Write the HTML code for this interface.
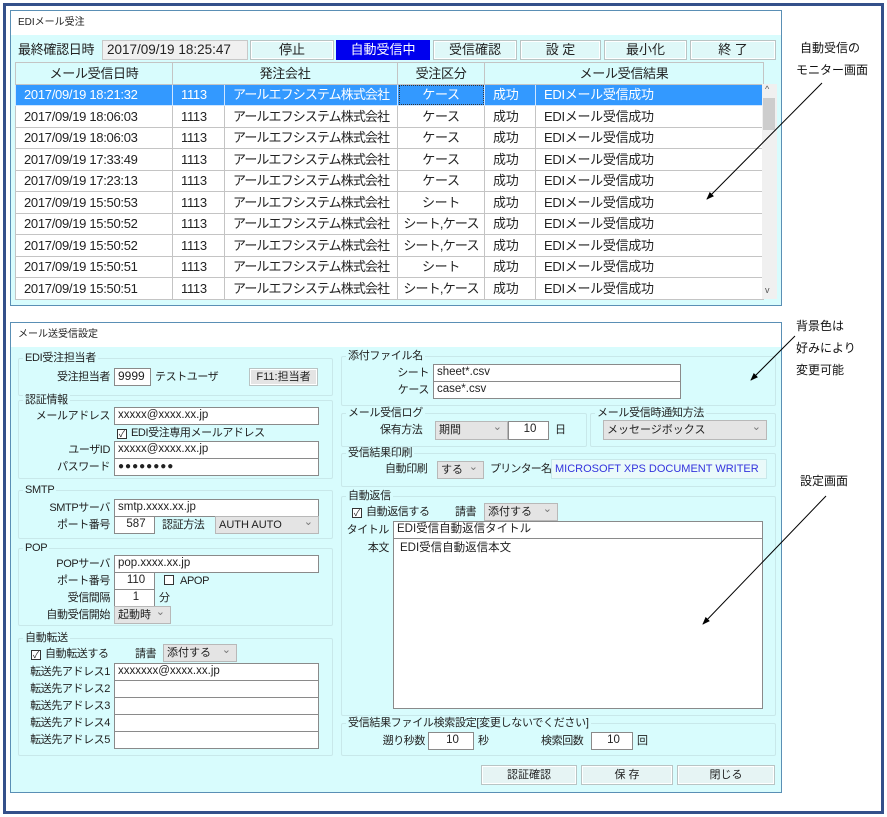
<!DOCTYPE html>
<html><head><meta charset="utf-8">
<style>
*{box-sizing:border-box;margin:0;padding:0}
body{width:887px;height:817px;background:#fff;position:relative;overflow:hidden;font-family:"Liberation Sans","Noto Sans CJK JP",sans-serif;color:#222}
.a{position:absolute;white-space:nowrap}
.frame{left:3px;top:3px;width:881px;height:811px;border:3px solid #34508a}
.win{background:#d8fcfd;border:1px solid #5a8fb5;overflow:hidden}
.wt{position:absolute;left:0;top:0;right:0;background:#fff;font-size:10px;padding:6px 0 0 7px;line-height:12px}
.btn{background:#dff8f8;border:1px solid #b9c4c4;box-shadow:inset 0 0 0 1px #fff;font-size:13px;text-align:center;line-height:18px}
table{border-collapse:collapse;position:absolute;left:4px;top:51px;font-size:13px;table-layout:fixed;width:748px;letter-spacing:-0.3px}
td,th{border:1px solid #c4c4c4;height:21.5px;padding:0 0 0 8px;font-weight:normal;text-align:left;white-space:nowrap;overflow:hidden;line-height:19px}
td.co{letter-spacing:-0.9px}
td.k{letter-spacing:-0.8px}
th{background:#d8fcfd;text-align:center;padding:0}
td.c{text-align:center;padding:0}
tr.sel td{background:#3399ff;color:#fff;border-color:#cfe6ff}
tbody tr{background:#fff}
.g{border:1px solid #c8e8ea;border-radius:2px}
.gl{position:absolute;font-size:11px;top:-7px;left:4px;background:#d8fcfd;padding:0 2px;line-height:12px;letter-spacing:-0.3px}
.box{background:#fff;border:1px solid #8a8a8a;font-size:11.5px;line-height:15px;padding-left:3px;overflow:hidden}
.sel2{background:#e4e4e4;border:1px solid #b8b8b8;font-size:11px;line-height:16px;padding-left:3px}
.sel2:after{content:"⌄";position:absolute;right:5px;top:-3px;color:#777;font-size:11px}
.l{font-size:11px;text-align:right;line-height:13px;letter-spacing:-0.4px}
.t{font-size:11px;line-height:13px;letter-spacing:-0.4px}
.cb{display:inline-block;width:10px;height:10px;border:1px solid #333;vertical-align:-1px;margin-right:4px;font-size:9px;line-height:8px;text-align:center;background:#fff;letter-spacing:0}
.ann{font-size:12px;color:#111;line-height:14px}
</style></head><body>
<div class="a frame"></div>

<div class="a win" style="left:10px;top:10px;width:772px;height:296px">
 <div class="wt" style="height:24px">EDIメール受注</div>
 <table>
<colgroup><col style="width:157px"><col style="width:52px"><col style="width:173px"><col style="width:87px"><col style="width:51px"><col style="width:228px"></colgroup>
<thead><tr><th>メール受信日時</th><th colspan="2">発注会社</th><th>受注区分</th><th colspan="2">メール受信結果</th></tr></thead>
<tbody>
<tr class="sel"><td>2017/09/19 18:21:32</td><td>1113</td><td class="co">アールエフシステム株式会社</td><td class="c" style="outline:1px dotted #333;outline-offset:-2px">ケース</td><td>成功</td><td>EDIメール受信成功</td></tr>
<tr><td>2017/09/19 18:06:03</td><td>1113</td><td class="co">アールエフシステム株式会社</td><td class="c">ケース</td><td>成功</td><td>EDIメール受信成功</td></tr>
<tr><td>2017/09/19 18:06:03</td><td>1113</td><td class="co">アールエフシステム株式会社</td><td class="c">ケース</td><td>成功</td><td>EDIメール受信成功</td></tr>
<tr><td>2017/09/19 17:33:49</td><td>1113</td><td class="co">アールエフシステム株式会社</td><td class="c">ケース</td><td>成功</td><td>EDIメール受信成功</td></tr>
<tr><td>2017/09/19 17:23:13</td><td>1113</td><td class="co">アールエフシステム株式会社</td><td class="c">ケース</td><td>成功</td><td>EDIメール受信成功</td></tr>
<tr><td>2017/09/19 15:50:53</td><td>1113</td><td class="co">アールエフシステム株式会社</td><td class="c">シート</td><td>成功</td><td>EDIメール受信成功</td></tr>
<tr><td>2017/09/19 15:50:52</td><td>1113</td><td class="co">アールエフシステム株式会社</td><td class="c k">シート,ケース</td><td>成功</td><td>EDIメール受信成功</td></tr>
<tr><td>2017/09/19 15:50:52</td><td>1113</td><td class="co">アールエフシステム株式会社</td><td class="c k">シート,ケース</td><td>成功</td><td>EDIメール受信成功</td></tr>
<tr><td>2017/09/19 15:50:51</td><td>1113</td><td class="co">アールエフシステム株式会社</td><td class="c">シート</td><td>成功</td><td>EDIメール受信成功</td></tr>
<tr><td>2017/09/19 15:50:51</td><td>1113</td><td class="co">アールエフシステム株式会社</td><td class="c k">シート,ケース</td><td>成功</td><td>EDIメール受信成功</td></tr>
</tbody></table>
</div>
<div class="a" style="left:18px;top:41px;font-size:13px;line-height:18px;letter-spacing:-0.3px">最終確認日時</div>
<div class="a" style="left:102px;top:40px;width:146px;height:20px;background:#f0f0f0;border:1px solid #c8c8c8;font-size:13.5px;line-height:18px;padding-left:4px">2017/09/19 18:25:47</div>
<div class="a btn" style="left:250px;top:40px;width:84px;height:20px">停止</div>
<div class="a btn" style="left:336px;top:40px;width:94px;height:20px;background:#0000ee;color:#fff;border-color:#0000ee;box-shadow:none">自動受信中</div>
<div class="a btn" style="left:433px;top:40px;width:84px;height:20px">受信確認</div>
<div class="a btn" style="left:520px;top:40px;width:81px;height:20px">設 定</div>
<div class="a btn" style="left:604px;top:40px;width:83px;height:20px">最小化</div>
<div class="a btn" style="left:690px;top:40px;width:86px;height:20px">終 了</div>
<div class="a" style="left:762px;top:84px;width:15px;height:215px;background:#f0f0f0"></div>
<div class="a" style="left:763px;top:98px;width:12px;height:32px;background:#cdcdcd"></div>
<div class="a" style="left:765px;top:84px;font-size:9px;color:#555">^</div>
<div class="a" style="left:765px;top:285px;font-size:9px;color:#555">v</div>

<div class="a win" style="left:10px;top:322px;width:772px;height:471px">
 <div class="wt" style="height:24px">メール送受信設定</div>
</div>

<div class="a g" style="left:18px;top:358px;width:315px;height:38px"><span class="gl">EDI受注担当者</span></div>
<div class="a l" style="left:20px;top:371px;width:90px">受注担当者</div>
<div class="a box" style="left:114px;top:368px;width:37px;height:18px;font-size:12px">9999</div>
<div class="a t" style="left:155px;top:371px">テストユーザ</div>
<div class="a btn" style="left:249px;top:368px;width:69px;height:18px;font-size:11px;line-height:16px;background:#e4e4e4">F11:担当者</div>

<div class="a g" style="left:18px;top:400px;width:315px;height:79px"><span class="gl">認証情報</span></div>
<div class="a l" style="left:20px;top:410px;width:90px">メールアドレス</div>
<div class="a box" style="left:114px;top:407px;width:205px;height:18px">xxxxx@xxxx.xx.jp</div>
<div class="a t" style="left:117px;top:427px"><span class="cb">✓</span>EDI受注専用メールアドレス</div>
<div class="a l" style="left:20px;top:444px;width:90px">ユーザID</div>
<div class="a box" style="left:114px;top:441px;width:205px;height:18px">xxxxx@xxxx.xx.jp</div>
<div class="a l" style="left:20px;top:461px;width:90px">パスワード</div>
<div class="a box" style="left:114px;top:458px;width:205px;height:18px;font-size:10px;letter-spacing:1px">●●●●●●●●</div>

<div class="a g" style="left:18px;top:490px;width:315px;height:49px"><span class="gl">SMTP</span></div>
<div class="a l" style="left:20px;top:502px;width:90px">SMTPサーバ</div>
<div class="a box" style="left:114px;top:499px;width:205px;height:18px">smtp.xxxx.xx.jp</div>
<div class="a l" style="left:20px;top:519px;width:90px">ポート番号</div>
<div class="a box" style="left:114px;top:516px;width:41px;height:18px;text-align:center">587</div>
<div class="a t" style="left:162px;top:519px">認証方法</div>
<div class="a sel2" style="left:215px;top:516px;width:104px;height:18px">AUTH AUTO</div>

<div class="a g" style="left:18px;top:548px;width:315px;height:78px"><span class="gl">POP</span></div>
<div class="a l" style="left:20px;top:558px;width:90px">POPサーバ</div>
<div class="a box" style="left:114px;top:555px;width:205px;height:18px">pop.xxxx.xx.jp</div>
<div class="a l" style="left:20px;top:575px;width:90px">ポート番号</div>
<div class="a box" style="left:114px;top:572px;width:41px;height:18px;text-align:center">110</div>
<div class="a t" style="left:164px;top:575px"><span class="cb"></span> APOP</div>
<div class="a l" style="left:20px;top:592px;width:90px">受信間隔</div>
<div class="a box" style="left:114px;top:589px;width:41px;height:18px;text-align:center">1</div>
<div class="a t" style="left:159px;top:592px">分</div>
<div class="a l" style="left:20px;top:609px;width:90px">自動受信開始</div>
<div class="a sel2" style="left:114px;top:606px;width:57px;height:18px">起動時</div>

<div class="a g" style="left:18px;top:638px;width:315px;height:118px"><span class="gl">自動転送</span></div>
<div class="a t" style="left:31px;top:648px"><span class="cb">✓</span>自動転送する</div>
<div class="a t" style="left:135px;top:648px">請書</div>
<div class="a sel2" style="left:163px;top:644px;width:74px;height:18px">添付する</div>
<div class="a l" style="left:20px;top:666px;width:90px">転送先アドレス1</div>
<div class="a box" style="left:114px;top:663px;width:205px;height:18px">xxxxxxx@xxxx.xx.jp</div>
<div class="a l" style="left:20px;top:683px;width:90px">転送先アドレス2</div>
<div class="a box" style="left:114px;top:680px;width:205px;height:18px"></div>
<div class="a l" style="left:20px;top:700px;width:90px">転送先アドレス3</div>
<div class="a box" style="left:114px;top:697px;width:205px;height:18px"></div>
<div class="a l" style="left:20px;top:717px;width:90px">転送先アドレス4</div>
<div class="a box" style="left:114px;top:714px;width:205px;height:18px"></div>
<div class="a l" style="left:20px;top:734px;width:90px">転送先アドレス5</div>
<div class="a box" style="left:114px;top:731px;width:205px;height:18px"></div>

<div class="a g" style="left:341px;top:356px;width:435px;height:50px"><span class="gl">添付ファイル名</span></div>
<div class="a l" style="left:340px;top:367px;width:89px">シート</div>
<div class="a box" style="left:433px;top:364px;width:248px;height:18px">sheet*.csv</div>
<div class="a l" style="left:340px;top:384px;width:89px">ケース</div>
<div class="a box" style="left:433px;top:381px;width:248px;height:18px">case*.csv</div>

<div class="a g" style="left:341px;top:413px;width:246px;height:34px"><span class="gl">メール受信ログ</span></div>
<div class="a t" style="left:380px;top:424px">保有方法</div>
<div class="a sel2" style="left:435px;top:421px;width:73px;height:19px">期間</div>
<div class="a box" style="left:508px;top:421px;width:41px;height:19px;text-align:center">10</div>
<div class="a t" style="left:555px;top:424px">日</div>
<div class="a g" style="left:590px;top:413px;width:186px;height:34px"><span class="gl">メール受信時通知方法</span></div>
<div class="a sel2" style="left:603px;top:420px;width:164px;height:20px;line-height:18px">メッセージボックス</div>

<div class="a g" style="left:341px;top:453px;width:435px;height:34px"><span class="gl">受信結果印刷</span></div>
<div class="a t" style="left:385px;top:463px">自動印刷</div>
<div class="a sel2" style="left:437px;top:461px;width:47px;height:18px">する</div>
<div class="a t" style="left:490px;top:463px;letter-spacing:-0.8px">プリンター名</div>
<div class="a" style="left:551px;top:459px;width:216px;height:20px;background:#eafafa;border:1px solid #c8e8ea;color:#3333dd;font-size:11px;line-height:18px;padding-left:3px">MICROSOFT XPS DOCUMENT WRITER</div>

<div class="a g" style="left:341px;top:496px;width:435px;height:220px"><span class="gl">自動返信</span></div>
<div class="a t" style="left:352px;top:506px"><span class="cb">✓</span>自動返信する</div>
<div class="a t" style="left:455px;top:506px">請書</div>
<div class="a sel2" style="left:484px;top:503px;width:74px;height:18px">添付する</div>
<div class="a l" style="left:340px;top:524px;width:49px">タイトル</div>
<div class="a box" style="left:393px;top:521px;width:370px;height:18px">EDI受信自動返信タイトル</div>
<div class="a l" style="left:340px;top:542px;width:49px">本文</div>
<div class="a box" style="left:393px;top:538px;width:370px;height:171px;padding:2px 6px">EDI受信自動返信本文</div>

<div class="a g" style="left:341px;top:723px;width:435px;height:33px"><span class="gl">受信結果ファイル検索設定[変更しないでください]</span></div>
<div class="a l" style="left:370px;top:735px;width:55px">遡り秒数</div>
<div class="a box" style="left:428px;top:732px;width:46px;height:18px;text-align:center">10</div>
<div class="a t" style="left:478px;top:735px">秒</div>
<div class="a t" style="left:541px;top:735px">検索回数</div>
<div class="a box" style="left:591px;top:732px;width:42px;height:18px;text-align:center">10</div>
<div class="a t" style="left:637px;top:735px">回</div>

<div class="a btn" style="left:481px;top:765px;width:96px;height:20px;font-size:11px;background:#e6f4f4">認証確認</div>
<div class="a btn" style="left:581px;top:765px;width:92px;height:20px;font-size:11px;background:#e6f4f4">保 存</div>
<div class="a btn" style="left:677px;top:765px;width:98px;height:20px;font-size:11px;background:#e6f4f4">閉じる</div>

<div class="a ann" style="left:800px;top:41px">自動受信の</div>
<div class="a ann" style="left:796px;top:63px">モニター画面</div>
<div class="a ann" style="left:796px;top:319px">背景色は</div>
<div class="a ann" style="left:796px;top:341px">好みにより</div>
<div class="a ann" style="left:796px;top:363px">変更可能</div>
<div class="a ann" style="left:800px;top:474px">設定画面</div>
<svg class="a" style="left:0;top:0" width="887" height="817">
<defs><marker id="m" markerWidth="8" markerHeight="8" refX="7" refY="4" orient="auto"><path d="M0,1 L8,4 L0,7 z" fill="#000"/></marker></defs>
<g stroke="#000" stroke-width="1" fill="none">
<line x1="822" y1="83" x2="707" y2="199" marker-end="url(#m)"/>
<line x1="795" y1="336" x2="751" y2="380" marker-end="url(#m)"/>
<line x1="826" y1="496" x2="703" y2="624" marker-end="url(#m)"/>
</g></svg>
</body></html>
